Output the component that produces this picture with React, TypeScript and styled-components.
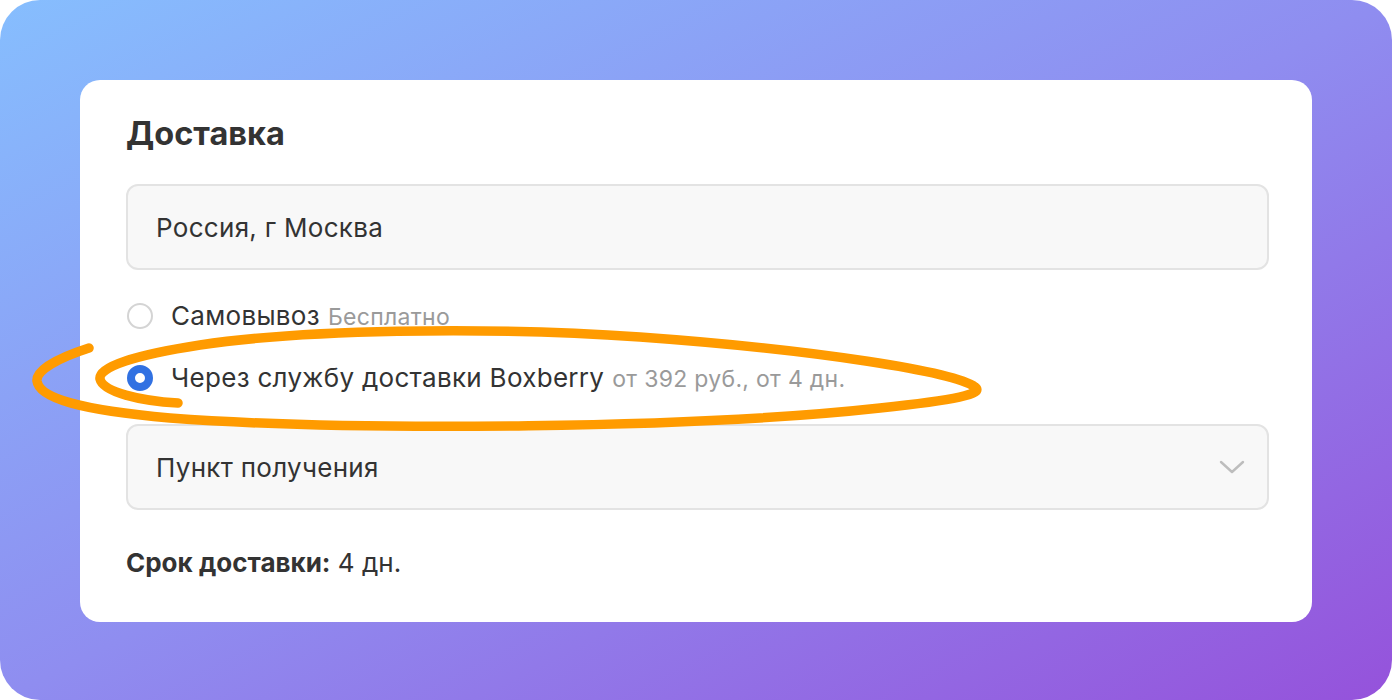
import React from "react";
import styled, { createGlobalStyle } from "styled-components";

const GlobalStyle = createGlobalStyle`
  html, body { margin: 0; padding: 0; background: #ffffff; }
  * { box-sizing: border-box; }
  body { font-family: Inter, "Liberation Sans", Arial, sans-serif; color: #333333; }
`;

const Frame = styled.div`
  position: relative;
  width: 1392px;
  height: 700px;
  border-radius: 40px;
  background: linear-gradient(to bottom right, #86befe 0%, #8f8df0 50%, #9552db 100%);
  padding: 80px 80px 78px;
  display: flex;
  overflow: hidden;
`;

const Card = styled.section`
  flex: 1;
  background: #ffffff;
  border-radius: 20px;
  padding: 34px 43px 0 46px;
  display: flex;
  flex-direction: column;
`;

const Title = styled.h2`
  margin: 0;
  font-size: 32.5px;
  line-height: 40px;
  font-weight: 700;
  color: #333333;
`;

const Field = styled.div<{ $mt: number }>`
  margin-top: ${(p) => p.$mt}px;
  height: 86px;
  border: 2px solid #e3e3e3;
  border-radius: 12px;
  background: #f8f8f8;
  display: flex;
  align-items: center;
  justify-content: space-between;
  padding: 0 22px 0 28px;
  font-size: 26px;
  letter-spacing: 0.3px;
  color: #333333;
`;

const Options = styled.div`
  margin-top: 26px;
  display: flex;
  flex-direction: column;
  gap: 22px;
`;

const OptionRow = styled.label`
  display: flex;
  align-items: center;
  height: 40px;
  gap: 18px;
  font-size: 26px;
  letter-spacing: 0.3px;
  line-height: 40px;
  color: #333333;
`;

const Radio = styled.span<{ $checked?: boolean }>`
  flex: none;
  width: 26px;
  height: 26px;
  margin-left: 1px;
  border-radius: 50%;
  background: #ffffff;
  border: ${(p) => (p.$checked ? "8.5px solid #3171e2" : "2px solid #d4d4d4")};
`;

const Note = styled.span`
  font-size: 23px;
  color: #9a9a9a;
  margin-left: 8px;
`;

const Term = styled.p`
  margin: 38px 0 0;
  font-size: 26px;
  line-height: 30px;
  color: #333333;
  b { font-weight: 700; }
`;

const Overlay = styled.svg`
  position: absolute;
  left: 0;
  top: 0;
  pointer-events: none;
`;

const Chevron = () => (
  <svg width="26" height="16" viewBox="0 0 26 16" fill="none">
    <path d="M2 3 L13 13 L24 3" stroke="#bdbdbd" strokeWidth="2.4" strokeLinecap="round" strokeLinejoin="round" />
  </svg>
);

export default function App() {
  return (
    <>
      <GlobalStyle />
      <Frame>
        <Card>
          <Title>Доставка</Title>
          <Field $mt={30}>Россия, г Москва</Field>
          <Options>
            <OptionRow>
              <Radio />
              <span>
                Самовывоз<Note>Бесплатно</Note>
              </span>
            </OptionRow>
            <OptionRow>
              <Radio $checked />
              <span>
                Через службу доставки Boxberry<Note>от 392 руб., от 4 дн.</Note>
              </span>
            </OptionRow>
          </Options>
          <Field $mt={26}>
            <span>Пункт получения</span>
            <Chevron />
          </Field>
          <Term>
            <b>Срок доставки:</b> 4 дн.
          </Term>
        </Card>
        <Overlay width="1392" height="700" viewBox="0 0 1392 700">
          <path
            d="M 89 348 C 58 358, 36 370, 37 381 C 39 398, 80 410, 170 418 C 360 432, 700 428, 880 408 C 955 400, 985 394, 975 387 C 955 372, 820 350, 640 337 C 480 326, 300 330, 200 345 C 135 355, 98 367, 100 379 C 103 392, 140 401, 178 403"
            fill="none"
            stroke="#ff9b00"
            strokeWidth="9.5"
            strokeLinecap="round"
            strokeLinejoin="round"
          />
        </Overlay>
      </Frame>
    </>
  );
}
